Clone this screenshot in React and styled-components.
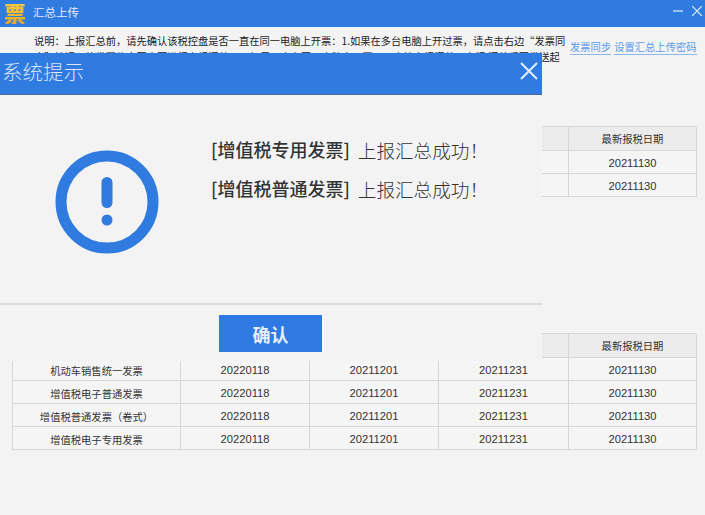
import React from 'react';
import styled, { createGlobalStyle } from 'styled-components';

const GlobalStyle = createGlobalStyle`
  html, body {
    margin: 0;
    padding: 0;
    background: #f3f3f3;
    font-family: "Noto Sans CJK SC", "Liberation Sans", sans-serif;
  }
`;

const Page = styled.div`
  position: relative;
  width: 705px;
  height: 515px;
  overflow: hidden;
  background: #f3f3f3;
  color: #333;
`;

const TitleBar = styled.div`
  display: flex;
  align-items: center;
  box-sizing: border-box;
  height: 27px;
  padding: 0 3px 3px 4px;
  background: #2f7be0;
  color: #e4eefb;
  font-size: 11.5px;
`;

const Logo = styled.span`
  display: block;
  width: 29px;
  font-size: 22px;
  line-height: 24px;
  font-weight: 900;
  background: linear-gradient(#f8d043, #e8a52a);
  -webkit-background-clip: text;
  background-clip: text;
  color: transparent;
`;

const WindowControls = styled.div`
  display: flex;
  align-items: center;
  gap: 9px;
  margin-left: auto;
  padding-bottom: 2px;
`;

const Notice = styled.div`
  display: flex;
  height: 99px;
  padding-left: 34px;
`;

const NoticeText = styled.p`
  width: 534px;
  margin: 6px 0 0;
  font-size: 10.25px;
  line-height: 16px;
  white-space: nowrap;
  color: #222;
`;

const Links = styled.div`
  display: flex;
  gap: 3px;
  margin-top: 13px;
  padding-left: 2px;
`;

const LinkText = styled.a`
  height: 14px;
  border-bottom: 1px solid #8db8ef;
  font-size: 10.3px;
  line-height: 14px;
  color: #5a9ae8;
`;

const Table = styled.div`
  display: grid;
  grid-template-columns: 168px 129px 129px 130px 128px;
  width: 684px;
  margin-left: 12px;
  margin-bottom: ${(p) => p.$gap || 0}px;
  border: solid #d6d6d6;
  border-width: 1px 0 0 1px;
  box-sizing: border-box;
`;

const Cell = styled.div`
  display: flex;
  align-items: center;
  justify-content: center;
  height: ${(p) => (p.$head ? 24 : 23)}px;
  padding-top: ${(p) => (p.$head ? 0 : 2)}px;
  box-sizing: border-box;
  border: solid #d6d6d6;
  border-width: 0 1px 1px 0;
  background: ${(p) => (p.$head ? '#ececec' : '#f5f5f5')};
  font-size: ${(p) => (p.$num ? 11.2 : 10.3)}px;
  font-family: ${(p) => (p.$num ? '"Liberation Sans", sans-serif' : 'inherit')};
  color: #333;
`;

const Modal = styled.div`
  position: absolute;
  left: 0;
  top: 53px;
  display: flex;
  flex-direction: column;
  width: 542px;
  height: 308px;
  background: #f3f3f3;
`;

const ModalHeader = styled.div`
  display: flex;
  align-items: center;
  justify-content: space-between;
  box-sizing: border-box;
  height: 42px;
  padding: 0 3px 6px 2px;
  background: #2f7be0;
  border-bottom: 1px solid #4a6f9f;
  color: #d7e6f8;
  font-size: 20.5px;
  font-weight: 300;
`;

const ModalBody = styled.div`
  display: flex;
  height: 208px;
  border-bottom: 2px solid #dcdcdc;
`;

const IconSlot = styled.div`
  width: 211px;
  padding: 55px 0 0 55px;
  box-sizing: border-box;
`;

const Messages = styled.div`
  display: flex;
  flex-direction: column;
  gap: 9px;
  padding-top: 39px;
`;

const Message = styled.div`
  display: flex;
  gap: 8px;
  align-items: center;
  height: 30px;
`;

const Invoice = styled.span`
  font-size: 18px;
  font-weight: 500;
  color: #333;
`;

const Result = styled.span`
  font-size: 18.6px;
  font-weight: 300;
  color: #333;
`;

const ModalFooter = styled.div`
  display: flex;
  padding: 10px 0 0 219px;
`;

const ConfirmButton = styled.button`
  width: 103px;
  height: 37px;
  padding: 0;
  border: 0;
  background: #2e7ae2;
  color: #e6f0fc;
  font-family: inherit;
  font-size: 18px;
  font-weight: 700;
`;

const noticeFirst = '说明\uFF1A上报汇总前\uFF0C请先确认该税控盘是否一直在同一电脑上开票\uFF1A1.如果在多台电脑上开过票\uFF0C请点击右边\u201C发票同';
const noticeSecond = '步\u201D按钮\uFF0C将发票信息同步再进行上报汇总\uFF1B2. 如果一直在同一电脑上开票\uFF0C可直接上报汇总\uFF0C上报 汇总后再发送起';
const success = '上报汇总成功\uFF01';

const heads = ['发票种类', '报税日期', '开始日期', '截止日期', '最新报税日期'];
const topRows = [
  ['增值税专用发票', '20220118', '20211201', '20211231', '20211130'],
  ['增值税普通发票', '20220118', '20211201', '20211231', '20211130'],
];
const bottomRows = [
  ['机动车销售统一发票', '20220118', '20211201', '20211231', '20211130'],
  ['增值税电子普通发票', '20220118', '20211201', '20211231', '20211130'],
  ['增值税普通发票\uFF08卷式\uFF09', '20220118', '20211201', '20211231', '20211130'],
  ['增值税电子专用发票', '20220118', '20211201', '20211231', '20211130'],
];

const DataTable = ({ rows, gap }) => (
  <Table $gap={gap}>
    {heads.map((h) => (
      <Cell $head key={h}>{h}</Cell>
    ))}
    {rows.map((row) =>
      row.map((v, i) => (
        <Cell $num={i > 0} key={row[0] + i}>{v}</Cell>
      ))
    )}
  </Table>
);

const App = () => (
  <Page>
    <GlobalStyle />
    <TitleBar>
      <Logo>票</Logo>
      汇总上传
      <WindowControls>
        <svg width="10" height="10" viewBox="0 0 10 10">
          <path d="M0 5h10" stroke="#e4eefb" strokeWidth="1.2" />
        </svg>
        <svg width="10" height="10" viewBox="0 0 10 10">
          <path d="M0 0l10 10M10 0L0 10" stroke="#e4eefb" strokeWidth="1.2" />
        </svg>
      </WindowControls>
    </TitleBar>
    <Notice>
      <NoticeText>
        {noticeFirst}
        <br />
        {noticeSecond}
      </NoticeText>
      <Links>
        <LinkText>发票同步</LinkText>
        <LinkText>设置汇总上传密码</LinkText>
      </Links>
    </Notice>
    <DataTable rows={topRows} gap={136} />
    <DataTable rows={bottomRows} />
    <Modal>
      <ModalHeader>
        系统提示
        <svg width="20" height="20" viewBox="0 0 20 20">
          <path d="M2 2l16 16M18 2L2 18" stroke="#e3eefb" strokeWidth="2" />
        </svg>
      </ModalHeader>
      <ModalBody>
        <IconSlot>
          <svg width="104" height="104" viewBox="0 0 104 104">
            <circle cx="52" cy="52" r="46" fill="none" stroke="#2f7be0" strokeWidth="11" />
            <rect x="46.5" y="27" width="11" height="31" rx="5.5" fill="#2f7be0" />
            <circle cx="52" cy="70" r="5.5" fill="#2f7be0" />
          </svg>
        </IconSlot>
        <Messages>
          <Message>
            <Invoice>[增值税专用发票]</Invoice>
            <Result>{success}</Result>
          </Message>
          <Message>
            <Invoice>[增值税普通发票]</Invoice>
            <Result>{success}</Result>
          </Message>
        </Messages>
      </ModalBody>
      <ModalFooter>
        <ConfirmButton>确认</ConfirmButton>
      </ModalFooter>
    </Modal>
  </Page>
);

export default App;
